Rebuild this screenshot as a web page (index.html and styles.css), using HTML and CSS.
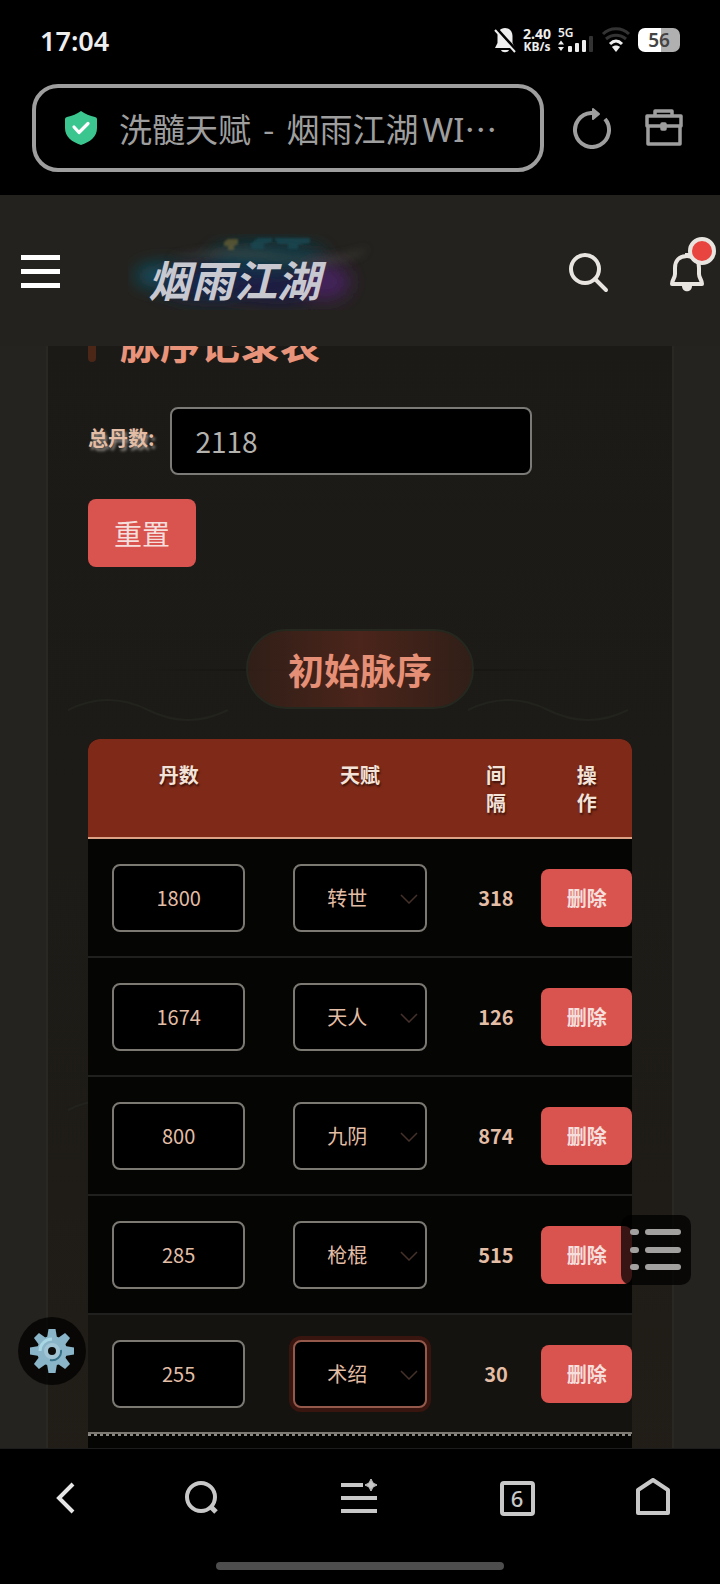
FILE: index.html
```html
<!DOCTYPE html>
<html lang="zh-CN">
<head>
    <meta charset="UTF-8">
    <meta name="viewport" content="width=device-width, initial-scale=1.0">
    <title>洗髓天赋 - 烟雨江湖</title>
    <link rel="stylesheet" href="styles.css">
</head>
<body>
    <div class="status-bar">
        <span class="time">17:04</span>
        <div class="status-icons">
            <svg width="22" height="26" viewBox="0 0 22 26">
                <path d="M11 1C6 1 3.500 5 3.500 9v7L1 21h20l-2.500-5V9C18.500 5 16 1 11 1z" fill="#eee"/>
                <path d="M7 23h8c-1 3-7 3-8 0z" fill="#eee"/>
                <path d="M2 1l20 22" stroke="#000" stroke-width="3"/>
                <path d="M1 3l20 22" stroke="#eee" stroke-width="2"/>
            </svg>
            <div class="net-speed"><span>2.40</span><span>KB/s</span></div>
            <div class="signal">
                <span>5G</span>
                <svg width="36" height="16" viewBox="0 0 36 16">
                    <path d="M0 8.500L3 4.500L6 8.500zM0 11L3 15L6 11z" fill="#eee"/>
                    <rect x="10" y="10" width="4" height="6" rx="1" fill="#eee"/>
                    <rect x="17" y="7" width="4" height="9" rx="1" fill="#eee"/>
                    <rect x="24" y="4" width="4" height="12" rx="1" fill="#eee"/>
                    <rect x="31" y="0" width="4" height="16" rx="1" fill="#333"/>
                </svg>
            </div>
            <svg width="30" height="26" viewBox="0 0 30 26" fill="none" stroke-width="3">
                <path d="M2 7C9 0 21 0 28 7" stroke="#333"/>
                <path d="M5 12c6-5 14-5 20 0" stroke="#333"/>
                <path d="M9 17c4-4 8-4 12 0" stroke="#eee"/>
                <path d="M11 20c2-2 6-2 8 0l-4 5z" fill="#eee"/>
            </svg>
            <div class="battery">56</div>
        </div>
    </div>

    <div class="address-bar">
        <button class="address" type="button">
            <svg width="32" height="34" viewBox="0 0 32 34">
                <path d="M16 0c4 3 9 5 14 6q2 .5 2 2v9c0 9-7 14-16 17C7 31 0 26 0 17V8q0-1.500 2-2C7 5 12 3 16 0z" fill="#3cc68f"/>
                <path d="M9 16l5 5.500 9-9" fill="none" stroke="#fff" stroke-width="3.200" stroke-linecap="round" stroke-linejoin="round"/>
            </svg>
            <span class="address-text">洗髓天赋<span class="dash">-</span>烟雨江湖<span class="latin">WI</span>…</span>
        </button>
        <button class="icon-btn" type="button" aria-label="刷新">
            <svg width="40" height="42" viewBox="0 0 40 42" fill="none" stroke="#9e9e9e" stroke-width="4">
                <path d="M33 12A17 17 0 1 1 19 6h4"/>
                <path d="M21 2l6 5-6 5z" fill="#9e9e9e" stroke-width="2" stroke-linejoin="round"/>
            </svg>
        </button>
        <button class="icon-btn" type="button" aria-label="工具箱">
            <svg width="40" height="42" viewBox="0 0 40 42" fill="none" stroke="#9e9e9e" stroke-width="3.500" stroke-linejoin="round">
                <path d="M11 9V4h17v5M3 9h34v10H3zM4 19v18h32V19"/>
                <rect x="18" y="17" width="3" height="5" fill="#9e9e9e"/>
            </svg>
        </button>
    </div>

    <main class="page">
        <header class="site-header">
            <button class="icon-btn menu-btn" type="button" aria-label="菜单">
                <svg width="39" height="33" viewBox="0 0 39 33" fill="#fff">
                    <path d="M0 0h39v5H0zM0 14h39v5H0zM0 28h39v5H0z"/>
                </svg>
            </button>
            <a class="logo" href="#">
                <svg class="logo-bg" width="250" height="76" viewBox="0 0 250 76">
                    <defs>
                        <filter id="soft" x="-30%" y="-50%" width="160%" height="200%"><feGaussianBlur stdDeviation="9"/></filter>
                        <filter id="mist" x="-30%" y="-50%" width="160%" height="200%"><feGaussianBlur stdDeviation="4"/></filter>
                        <filter id="haze"><feGaussianBlur stdDeviation="1"/></filter>
                    </defs>
                    <g filter="url(#soft)">
                        <ellipse cx="36" cy="42" rx="28" ry="11" fill="#11586d"/>
                        <ellipse cx="90" cy="48" rx="62" ry="20" fill="#122648"/>
                        <ellipse cx="140" cy="22" rx="58" ry="14" fill="#103a46"/>
                        <ellipse cx="150" cy="54" rx="50" ry="16" fill="#1c1a44"/>
                        <ellipse cx="198" cy="48" rx="24" ry="18" fill="#44215c"/>
                    </g>
                    <path d="M40 24q60-14 110-4t90-6q-20 20-74 14T40 24z" fill="#4c4c45" opacity=".6" filter="url(#mist)"/>
                    <g filter="url(#haze)">
                        <path d="M96 8l4-3h10v5l-4 2v4h-6v-4h-4z" fill="#7c6c38" opacity=".6"/>
                        <path d="M122 10l8-6h14v4l-8 2v5h-12zM146 4h36v5l-12 2v4h-10v-5h-10z" fill="#164753" opacity=".8"/>
                    </g>
                </svg>
                <span class="logo-text">烟雨江湖</span>
            </a>
            <div class="header-actions">
                <button class="icon-btn" type="button" aria-label="搜索">
                    <svg width="42" height="42" viewBox="0 0 42 42" fill="none" stroke="#e8e5e1" stroke-width="4" stroke-linecap="round">
                        <circle cx="18" cy="18" r="14"/>
                        <path d="M28 28l11 11"/>
                    </svg>
                </button>
                <button class="icon-btn bell-btn" type="button" aria-label="通知">
                    <svg width="36" height="42" viewBox="0 0 36 42" fill="none" stroke="#e8e5e1" stroke-width="4" stroke-linejoin="round">
                        <path d="M18 5C10 5 6 10 6 17v6c0 4-3 6-3 10h30c0-4-3-6-3-10v-6C30 10 26 5 18 5z"/>
                        <path d="M13 35h10c0 7-10 7-10 0z" fill="#e8e5e1" stroke="none"/>
                        <path d="M18 2v3"/>
                    </svg>
                    <span class="bell-dot"></span>
                </button>
            </div>
        </header>

        <div class="page-body">
            <section class="panel">
                <svg class="waves" width="584" height="460" viewBox="0 0 584 460" fill="none" stroke="#23231e" stroke-width="2">
                    <path d="M0 12q40-20 80 0t80 0M400 12q40-20 80 0t80 0"/>
                    <path d="M0 412q40-20 80 0t80 0M400 412q40-20 80 0t80 0"/>
                </svg>
                <h2 class="panel-title">脉序记录表</h2>
                <div class="form-row">
                    <label for="total">总丹数:</label>
                    <input class="total-input" id="total" type="text" inputmode="numeric" value="2118">
                    <button class="btn reset-btn" type="button">重置</button>
                </div>
                <div class="section-head">
                    <h3>初始脉序</h3>
                </div>
                <div class="table-wrap">
                    <table class="pulse-table">
                        <thead>
                            <tr><th class="wide">丹数</th><th class="wide">天赋</th><th>间隔</th><th>操作</th></tr>
                        </thead>
                        <tbody>
                            <tr>
                                <td><input type="text" inputmode="numeric" value="1800" aria-label="丹数"></td>
                                <td><div class="select-box"><select aria-label="天赋"><option>转世</option></select><svg width="18" height="10" viewBox="0 0 18 10"><path d="M1 1l8 8 8-8"/></svg></div></td>
                                <td class="gap">318</td>
                                <td class="action"><button class="btn" type="button">删除</button></td>
                            </tr>
                            <tr>
                                <td><input type="text" inputmode="numeric" value="1674" aria-label="丹数"></td>
                                <td><div class="select-box"><select aria-label="天赋"><option>天人</option></select><svg width="18" height="10" viewBox="0 0 18 10"><path d="M1 1l8 8 8-8"/></svg></div></td>
                                <td class="gap">126</td>
                                <td class="action"><button class="btn" type="button">删除</button></td>
                            </tr>
                            <tr>
                                <td><input type="text" inputmode="numeric" value="800" aria-label="丹数"></td>
                                <td><div class="select-box"><select aria-label="天赋"><option>九阴</option></select><svg width="18" height="10" viewBox="0 0 18 10"><path d="M1 1l8 8 8-8"/></svg></div></td>
                                <td class="gap">874</td>
                                <td class="action"><button class="btn" type="button">删除</button></td>
                            </tr>
                            <tr>
                                <td><input type="text" inputmode="numeric" value="285" aria-label="丹数"></td>
                                <td><div class="select-box"><select aria-label="天赋"><option>枪棍</option></select><svg width="18" height="10" viewBox="0 0 18 10"><path d="M1 1l8 8 8-8"/></svg></div></td>
                                <td class="gap">515</td>
                                <td class="action"><button class="btn" type="button">删除</button></td>
                            </tr>
                            <tr class="active">
                                <td><input type="text" inputmode="numeric" value="255" aria-label="丹数"></td>
                                <td><div class="select-box"><select aria-label="天赋"><option>术绍</option></select><svg width="18" height="10" viewBox="0 0 18 10"><path d="M1 1l8 8 8-8"/></svg></div></td>
                                <td class="gap">30</td>
                                <td class="action"><button class="btn" type="button">删除</button></td>
                            </tr>
                            <tr class="next">
                                <td colspan="4"></td>
                            </tr>
                        </tbody>
                    </table>
                </div>
            </section>
        </div>

        <button class="float-btn settings-btn" type="button" aria-label="设置">
            <svg width="46" height="46" viewBox="-23 -23 46 46">
                <g fill="#8ab5c9">
                    <path id="tooth" d="M-5 -13L-3.500 -22h7L5 -13V13L3.500 22h-7L-5 13z"/>
                    <use href="#tooth" transform="rotate(45)"/>
                    <use href="#tooth" transform="rotate(90)"/>
                    <use href="#tooth" transform="rotate(135)"/>
                    <circle r="15"/>
                </g>
                <path d="M-12 0A12 12 0 0 1 0 -12" fill="none" stroke="#a9d6e3" stroke-width="3"/>
                <path d="M9 -1A9 9 0 0 1 -2 9" fill="none" stroke="#39738a" stroke-width="2"/>
                <circle r="6" fill="#0c0c0b" stroke="#a1c5d5" stroke-width="4"/>
            </svg>
        </button>
        <button class="float-btn toc-btn" type="button" aria-label="目录">
            <svg width="52" height="42" viewBox="0 0 52 42" fill="#a3a19f">
                <rect x="0" y="0" width="9" height="6" rx="3"/><rect x="15" y="0" width="36" height="6" rx="3"/>
                <rect x="0" y="18" width="9" height="6" rx="3"/><rect x="15" y="18" width="36" height="6" rx="3"/>
                <rect x="0" y="35" width="9" height="6" rx="3"/><rect x="15" y="35" width="36" height="6" rx="3"/>
            </svg>
        </button>
    </main>

    <nav class="bottom-bar">
        <div class="bottom-icons">
            <button class="icon-btn" type="button" aria-label="后退">
                <svg width="40" height="40" viewBox="0 0 40 40" fill="none" stroke="#e6e6e6" stroke-width="4"><path d="M27 6L13 20l14 14"/></svg>
            </button>
            <button class="icon-btn" type="button" aria-label="搜索">
                <svg width="40" height="40" viewBox="0 0 40 40" fill="none" stroke="#c8c8c8" stroke-width="4"><circle cx="19" cy="19" r="14"/><path d="M29 29l5 5" stroke-width="5"/></svg>
            </button>
            <button class="icon-btn" type="button" aria-label="菜单">
                <svg width="40" height="40" viewBox="0 0 40 40" fill="#c8c8c8">
                    <path d="M2 5h22v4H2zM2 18h36v4H2zM2 31h36v4H2z"/>
                    <path d="M32 1q1 5 6 6q-5 1-6 6q-1-5-6-6q5-1 6-6z" stroke="#c8c8c8"/>
                </svg>
            </button>
            <button class="icon-btn" type="button" aria-label="标签页"><span class="tab-count">6</span></button>
            <button class="icon-btn" type="button" aria-label="主页">
                <svg width="40" height="40" viewBox="0 0 40 40" fill="none" stroke="#c8c8c8" stroke-width="4" stroke-linejoin="round"><path d="M4 12L19 2l15 10v23H4z"/></svg>
            </button>
        </div>
        <div class="home-line"></div>
    </nav>
</body>
</html>
```
FILE: styles.css
```css
* {
    box-sizing: border-box;
}
body {
    margin: 0;
    height: 100vh;
    display: flex;
    flex-direction: column;
    overflow: hidden;
    background: #000;
    color: #e3bda5;
    font-family: "Noto Sans CJK SC", sans-serif;
    font-size: 20px;
}
button, input, select {
    font-family: inherit;
    margin: 0;
}
svg {
    display: block;
}
.icon-btn {
    display: flex;
    align-items: center;
    justify-content: center;
    padding: 0;
    border: none;
    background: none;
    cursor: pointer;
}

/* phone status bar */
.status-bar {
    display: flex;
    align-items: center;
    justify-content: space-between;
    height: 80px;
    padding: 0 40px;
    color: #eee;
    font-family: "Noto Sans", sans-serif;
    font-weight: 600;
}
.time {
    font-size: 27px;
}
.status-icons {
    display: flex;
    align-items: center;
    gap: 7px;
}
.net-speed {
    display: flex;
    flex-direction: column;
    align-items: center;
    font-size: 14px;
    font-weight: bold;
    line-height: 14px;
}
.net-speed span:last-child {
    font-size: 12px;
    line-height: 12px;
}
.signal {
    font-size: 12px;
    line-height: 10px;
}
.signal svg {
    margin-top: -2px;
}
.battery {
    width: 42px;
    height: 24px;
    border-radius: 7px;
    background: linear-gradient(90deg, #fff 55%, #b0b0b0 55%);
    color: #444;
    font-size: 19px;
    line-height: 24px;
    text-align: center;
}

/* browser address bar */
.address-bar {
    display: flex;
    align-items: center;
    gap: 28px;
    padding: 4px 36px 23px 32px;
}
.address {
    flex: 1;
    display: flex;
    align-items: center;
    gap: 22px;
    height: 88px;
    padding: 0 29px;
    border: 4px solid #9e9e9e;
    border-radius: 26px;
    background: #000;
    color: #9e9e9e;
}
.address-text {
    font-size: 33px;
    white-space: nowrap;
}
.dash {
    padding: 0 12px;
}
.latin {
    padding-left: 4px;
    font-family: "Noto Sans", sans-serif;
}
.address-bar .icon-btn + .icon-btn {
    margin-left: 4px;
}

/* web page */
.page {
    flex: 1;
    min-height: 0;
    display: flex;
    flex-direction: column;
    position: relative;
    background: #24231f;
}
.site-header {
    display: flex;
    align-items: center;
    height: 151px;
    padding: 2px 15px 0 21px;
    background: #24221e;
}
.logo {
    position: relative;
    margin-left: 68px;
    text-decoration: none;
}
.logo-text {
    position: absolute;
    top: 10px;
    left: 20px;
    color: #c8c8d0;
    font-size: 43px;
    font-style: italic;
    font-weight: bold;
    line-height: 68px;
    white-space: nowrap;
}
.header-actions {
    display: flex;
    gap: 60px;
    margin-left: auto;
}
.bell-btn {
    position: relative;
}
.bell-dot {
    position: absolute;
    top: -14px;
    right: -11px;
    width: 28px;
    height: 28px;
    border: 4px solid #e8e5e1;
    border-radius: 50%;
    background: #e84541;
}
.page-body {
    flex: 1;
    min-height: 0;
    overflow: hidden;
    padding: 0 46px;
}
.panel {
    position: relative;
    margin-top: -64px;
    padding: 40px;
    border: 2px solid #292823;
    border-width: 0 2px;
    background: linear-gradient(180deg, #1b1a16, #1c1b17 40%, #221d17);
}
.waves {
    position: absolute;
    top: 416px;
    left: 20px;
}
.panel-title {
    display: flex;
    gap: 24px;
    margin: 0 0 45px;
    color: #e8937a;
    font-size: 40px;
    line-height: 40px;
}
.panel-title::before {
    content: "";
    width: 8px;
    border-radius: 4px;
    background: #4c2718;
}
.form-row {
    display: flex;
    flex-wrap: wrap;
    align-items: center;
    gap: 24px 15px;
}
.form-row label {
    padding-bottom: 8px;
    font-weight: bold;
    text-shadow: 2px 3px 3px #8a8580;
}
.total-input {
    width: 66.67%;
    height: 68px;
    padding: 0 24px;
    border: 2px solid #7b7a77;
    border-radius: 8px;
    background: #000;
    color: #b4b2af;
    font-size: 28px;
}
.btn {
    border: none;
    border-radius: 8px;
    background: #d9534f;
    color: #f5dedb;
    cursor: pointer;
}
.reset-btn {
    height: 68px;
    padding: 0 26px;
    font-size: 28px;
}
.section-head {
    position: relative;
    display: flex;
    justify-content: center;
    margin: 62px 0 30px;
}
.section-head::before {
    content: "";
    position: absolute;
    top: 50%;
    left: 10%;
    right: 10%;
    height: 2px;
    background: linear-gradient(90deg, transparent, #12110e, transparent);
}
.section-head h3 {
    position: relative;
    margin: 0;
    padding: 0 40px;
    border: 2px solid #25281f;
    border-radius: 40px;
    background: linear-gradient(90deg, rgba(50, 31, 24, 0.9), rgba(80, 37, 27, 0.9), rgba(50, 31, 24, 0.9));
    color: #e58f76;
    font-size: 36px;
    line-height: 76px;
}
.table-wrap {
    position: relative;
    overflow: hidden;
    border-radius: 12px 12px 0 0;
    background: #050503;
}
.pulse-table {
    width: 100%;
    table-layout: fixed;
    border-collapse: separate;
    border-spacing: 0;
    text-align: center;
}
.pulse-table th {
    padding: 22px 32px 20px;
    border-bottom: 2px solid #dda286;
    background: #7f2a19;
    color: #f3e3d9;
    line-height: 28px;
    text-shadow: 1px 2px 2px #3c130b;
    vertical-align: top;
}
.pulse-table .wide {
    width: 33.33%;
}
.pulse-table td {
    height: 119px;
    padding: 0 24px;
    border-bottom: 2px solid #20201e;
}
.pulse-table input, .pulse-table select {
    display: block;
    width: 100%;
    height: 68px;
    padding: 0;
    border: 2px solid #7c7973;
    border-radius: 8px;
    background: #000;
    color: #e3bda5;
    font-size: 20px;
    text-align: center;
}
.select-box {
    position: relative;
}
.pulse-table select {
    appearance: none;
    padding: 0 32px;
    text-align: left;
}
.select-box svg {
    position: absolute;
    top: 30px;
    right: 9px;
    fill: none;
    stroke: #453129;
    stroke-width: 1.5;
    pointer-events: none;
}
.pulse-table .gap {
    padding: 0;
    font-weight: bold;
}
.pulse-table .action {
    padding: 0;
}
.action .btn {
    width: 100%;
    height: 58px;
    padding: 0;
    font-size: 20px;
    font-weight: bold;
}
.pulse-table .active td {
    border-bottom-color: #7c7973;
    background: #141310;
}
.pulse-table .active select {
    border-color: #95594c;
    box-shadow: 0 0 0 4px #38150f;
}
/* dashed top edge of the next row */
.pulse-table .next td {
    background: repeating-linear-gradient(90deg, #8b8883 0 3px, transparent 3px 6px) 0 0 / 100% 2px no-repeat;
}

/* floating buttons */
.float-btn {
    position: absolute;
    display: flex;
    align-items: center;
    justify-content: center;
    padding: 0;
    border: none;
    background: rgba(0, 0, 0, 0.75);
    cursor: pointer;
}
.settings-btn {
    left: 18px;
    bottom: 63px;
    width: 68px;
    height: 68px;
    border-radius: 50%;
}
.toc-btn {
    right: 29px;
    bottom: 163px;
    width: 70px;
    height: 70px;
    border-radius: 10px;
}

/* browser bottom bar */
.bottom-bar {
    height: 136px;
    border-top: 1px solid #1c1c1c;
}
.bottom-icons {
    display: grid;
    grid-template-columns: 132fr 140fr 174fr 142fr 132fr;
    height: 98px;
}
.tab-count {
    width: 35px;
    height: 35px;
    border: 4px solid #c8c8c8;
    border-radius: 4px;
    color: #c8c8c8;
    font-family: "Noto Sans", sans-serif;
    font-size: 22px;
    font-weight: 500;
    line-height: 27px;
}
.home-line {
    width: 40%;
    height: 8px;
    margin: 15px auto 0;
    border-radius: 4px;
    background: #4d4d4d;
}
```
